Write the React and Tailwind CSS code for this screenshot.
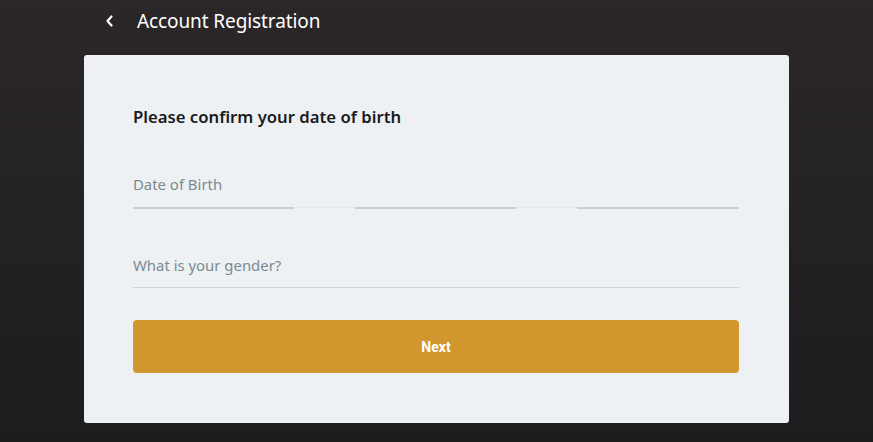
import React from "react";

export default function App() {
  return (
    <div
      className="w-full h-[442px] overflow-hidden bg-gradient-to-b from-[#2b2728] to-[#1d1c1e]"
      style={{ fontFamily: '"Noto Sans", "Open Sans", sans-serif' }}
    >
      <div className="mx-[84px]">
        <div className="h-[55px] flex items-center pl-[21px] pb-[12px]">
          <svg width="9" height="12" viewBox="0 0 9 12" className="mr-[23px] -mt-[2px]">
            <path d="M6.5 1.5 L2.5 6 L6.5 10.5" stroke="#ffffff" strokeWidth="2.2" fill="none" strokeLinecap="round" strokeLinejoin="round" />
          </svg>
          <span className="text-[19px] text-white tracking-[-0.1px]">Account Registration</span>
        </div>
        <div className="bg-[#edf1f3] rounded-[3px] h-[368px] pt-[50px] pl-[49px] pr-[50px]">
          <h1 className="text-[16.7px] font-semibold text-[#1b1b1b] leading-[24px]">
            Please confirm your date of birth
          </h1>
          <div className="mt-[44px]">
            <div className="text-[14.9px] text-[#7b8a91] leading-[22px]">Date of Birth</div>
            <div className="flex mt-[12px]">
              <div className="w-[161px] h-[2px] bg-[#c8ced1]" />
              <div className="w-[61px] h-[1px] bg-[#e4e8ea]" />
              <div className="w-[161px] h-[2px] bg-[#c8ced1]" />
              <div className="w-[61px] h-[1px] bg-[#e4e8ea]" />
              <div className="flex-1 h-[2px] bg-[#c8ced1]" />
            </div>
          </div>
          <div className="mt-[45px]">
            <div className="text-[14.9px] text-[#7b8a91] leading-[22px]">What is your gender?</div>
            <div className="mt-[11px] h-[1px] bg-[#ccd3d6]" />
          </div>
          <button
            className="mt-[32px] w-full h-[53px] rounded-[4px] bg-[#d2962f] text-white text-[14px] font-bold flex items-center justify-center pt-[2px]"
            style={{ fontFamily: 'Roboto, "Liberation Sans", sans-serif' }}
          >
            Next
          </button>
        </div>
      </div>
    </div>
  );
}
